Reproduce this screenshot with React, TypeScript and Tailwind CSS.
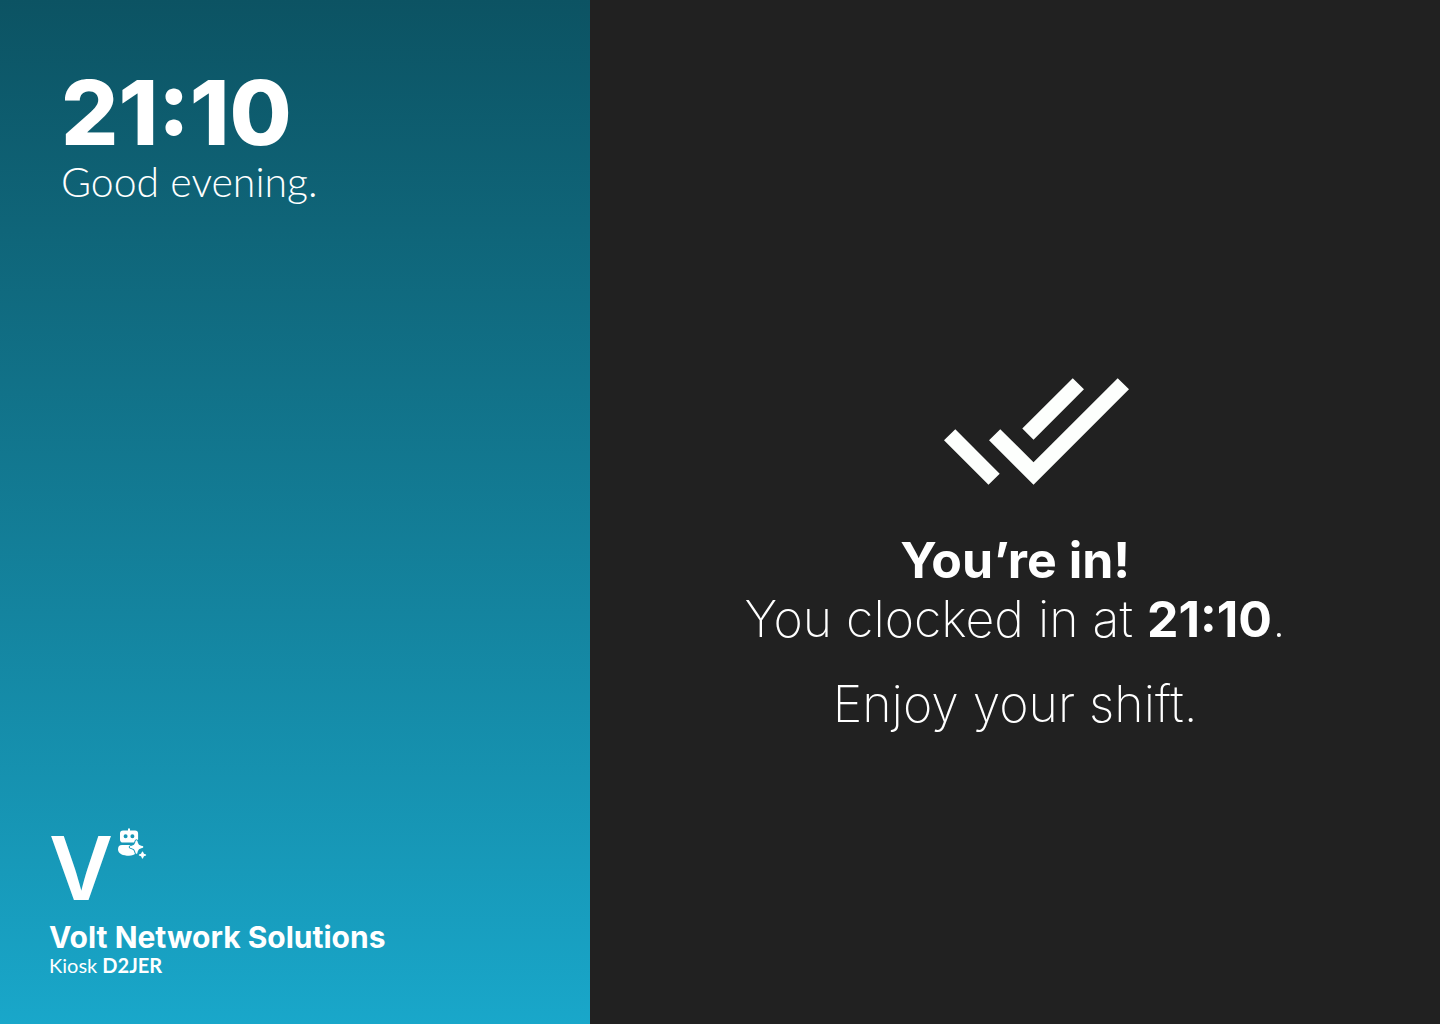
function DoubleCheck() {
  return (
    <svg viewBox="0.41 5.59 23.25 13.41" className="ml-[42px] h-[107px] w-[185px] shrink-0" fill="#fdfffd" aria-hidden="true">
      <path d="M18 7l-1.41-1.41-6.34 6.34 1.41 1.41L18 7zm4.24-1.41L11.66 16.17 7.48 12l-1.41 1.41L11.66 19l12-12-1.42-1.41zM.41 13.41L6 19l1.41-1.41L1.83 12 .41 13.41z" />
    </svg>
  );
}

function RobotMark() {
  return (
    <svg viewBox="0 0 30 32" className="h-8 w-[30px]" fill="white" aria-hidden="true">
      <path
        fillRule="evenodd"
        d="M11 2.200a1 1 0 0 1 2 0V3.400h5a3.100 3.100 0 0 1 3.100 3.100v6a3.100 3.100 0 0 1-3.100 3.100H6.100a3.100 3.100 0 0 1-3.100-3.100v-6a3.100 3.100 0 0 1 3.100-3.100H11zM8.600 7.200a2 2 0 1 0 0 4 2 2 0 0 0 0-4zm6.800 0a2 2 0 1 0 0 4 2 2 0 0 0 0-4z"
      />
      <path d="M5 18h11l3 8c-1.700 1.800-4 2.700-7 2.700-6 0-11-2-11-6.500C1 19.600 2.400 18 5 18z" />
      <path
        stroke="#179bbb"
        strokeWidth="2"
        paintOrder="stroke"
        d="M19.500 13.200c.5 0 .7.3.9.9.9 3.500 1.300 4 5 5 .6.200.9.400.9.900s-.3.700-.9.900c-3.700 1-4.100 1.500-5 5-.2.600-.4.900-.9.900s-.7-.3-.9-.9c-.9-3.500-1.300-4-5-5-.6-.2-.9-.4-.9-.9s.3-.7.900-.9c3.700-1 4.100-1.500 5-5 .2-.6.400-.9.900-.9z"
      />
      <path d="M25.500 24.400c.4 0 .6.300.7.700.4 1.600.6 1.800 2.200 2.200.5.100.8.300.8.700s-.3.600-.8.700c-1.600.4-1.800.6-2.200 2.200-.1.400-.3.700-.7.700s-.6-.3-.7-.7c-.4-1.600-.6-1.800-2.200-2.200-.5-.1-.8-.3-.8-.7s.3-.6.800-.7c1.600-.4 1.800-.6 2.200-2.200.1-.4.300-.7.700-.7z" />
    </svg>
  );
}

export default function App() {
  return (
    <div className="flex min-h-screen bg-[#212121] text-white">
      <aside className="flex w-[41%] flex-col justify-between bg-linear-to-b from-[#0c5363] to-[#19a7ca] pt-16 pb-[49px]">
        <header className="px-[61px]">
          <time className="block font-['Inter',sans-serif] text-[90px] leading-[98px] font-extrabold">21:10</time>
          <p className="font-['Lato',sans-serif] text-[41px] leading-[40px] font-light">Good evening.</p>
        </header>
        <footer className="px-[49px]">
          <div className="flex items-start gap-1" role="img" aria-label="Volt logo">
            <span className="font-['Inter',sans-serif] text-[88px] leading-[82px] font-semibold">V</span>
            <RobotMark />
          </div>
          <h2 className="mt-2.5 font-['Inter',sans-serif] text-[30px] leading-[36px] font-bold">Volt Network Solutions</h2>
          <p className="font-['Lato',sans-serif] text-[20px] leading-5">
            Kiosk <strong className="font-bold">D2JER</strong>
          </p>
        </footer>
      </aside>
      <main className="flex flex-1 flex-col items-center justify-center pt-[88px] text-center font-['Inter',sans-serif] text-[50px] leading-[59px] font-extralight">
        <DoubleCheck />
        <h1 className="mt-[46px] font-bold">You’re in!</h1>
        <p>
          You clocked in at <strong className="font-bold">21:10</strong>.
        </p>
        <p className="mt-[26px]">Enjoy your shift.</p>
      </main>
    </div>
  );
}
